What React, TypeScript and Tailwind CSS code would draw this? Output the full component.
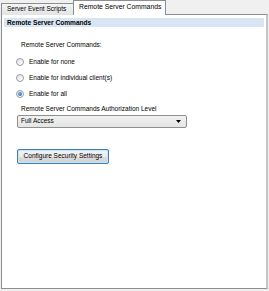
import React from "react";

function Radio({ checked, label }: { checked?: boolean; label: string }) {
  return (
    <div className="flex items-center h-[16px]">
      <div className="ml-[10px] w-[8px] h-[8px] rounded-full border border-[#9a9ea2] bg-[linear-gradient(135deg,#e2e2e2,#ffffff)] flex items-center justify-center">
        {checked && (
          <div className="w-[4px] h-[4px] rounded-full bg-[radial-gradient(circle_at_35%_35%,#6fb3e8,#1c5b9e)]" />
        )}
      </div>
      <span className="ml-[5px] leading-[8px]">{label}</span>
    </div>
  );
}

export default function App() {
  return (
    <div className="w-[269px] h-[291px] bg-[#f0f0f0] font-['Liberation_Sans',Arial,sans-serif] text-[6.5px] text-black overflow-hidden">
      {/* tabs */}
      <div className="flex items-end h-[15px] pl-[1px] relative z-10">
        <div className="h-[12px] w-[73px] border border-b-0 border-[#8a8d94] bg-[linear-gradient(#f4f4f4,#e3e3e3)] flex items-center pl-[5px] leading-none">
          Server Event Scripts
        </div>
        <div className="h-[15px] w-[93px] -ml-[1px] border border-b-0 border-[#8a8d94] bg-white flex items-center pl-[5px] pb-[1px] leading-none text-[6.8px]">
          Remote Server Commands
        </div>
      </div>
      {/* panel */}
      <div className="-mt-[1px] ml-[1px] w-[267px] h-[275px] border border-[#8a8d94] border-r-[2px] border-r-[#c4c5c8] bg-white pt-[3px] px-[2px]">
        <div className="h-[9px] bg-[#dae5f3] font-bold text-[6.6px] leading-[9px] pl-[3px]">
          Remote Server Commands
        </div>
        <div className="pl-[2px]">
          <div className="mt-[14px] ml-[15px] leading-[8px]">Remote Server Commands:</div>
          <div className="mt-[5px]">
            <Radio label="Enable for none" />
            <Radio label="Enable for individual client(s)" />
            <Radio checked label="Enable for all" />
          </div>
          <div className="mt-[3px] ml-[15px] leading-[8px]">Remote Server Commands Authorization Level</div>
          <div className="mt-[2px] ml-[11px] w-[170px] h-[13px] border border-[#8e8f8f] rounded-[2px] bg-[linear-gradient(#f2f2f2,#e4e4e4)] flex items-center justify-between pl-[3px] pr-[5px]">
            <span className="leading-none">Full Access</span>
            <svg width="5" height="3" viewBox="0 0 5 3">
              <path d="M0 0 L5 0 L2.5 3 Z" fill="#000" />
            </svg>
          </div>
          <div className="mt-[21px] ml-[11px] w-[92px] h-[15px] border border-[#3c7fb1] rounded-[2px] bg-[#c8e6f7] p-[1px]">
            <div className="w-full h-full rounded-[1px] flex items-center justify-center leading-none bg-[linear-gradient(#f2f2f2,#ebebeb_50%,#dddddd_51%,#d3d3d3)]">
              Configure Security Settings
            </div>
          </div>
        </div>
      </div>
    </div>
  );
}
